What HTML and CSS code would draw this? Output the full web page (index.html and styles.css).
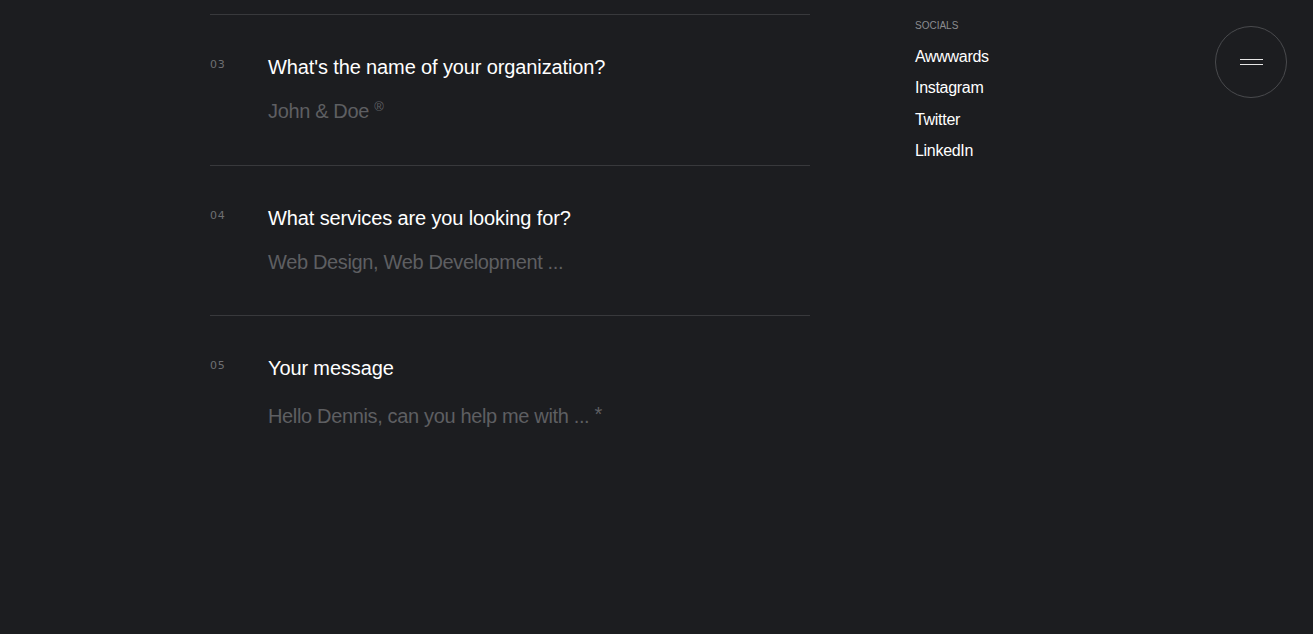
FILE: index.html
```
<!DOCTYPE html>
<html lang="en">
<head>
<meta charset="utf-8">
<title>Contact</title>
<link rel="stylesheet" href="styles.css">
</head>
<body>
<div class="page">
  <form class="form">
    <div class="field">
      <span class="num">03</span>
      <div class="body">
        <label class="question">What's the name of your organization?</label>
        <div class="answer">John &amp; Doe <sup class="mark">®</sup></div>
      </div>
    </div>
    <div class="field">
      <span class="num">04</span>
      <div class="body">
        <label class="question">What services are you looking for?</label>
        <div class="answer">Web Design, Web Development ...</div>
      </div>
    </div>
    <div class="field field-message">
      <span class="num">05</span>
      <div class="body">
        <label class="question">Your message</label>
        <div class="answer answer-message">Hello Dennis, can you help me with ... <span class="star">*</span></div>
      </div>
    </div>
  </form>
  <aside class="socials">
    <h5 class="socials-title">SOCIALS</h5>
    <ul class="socials-list">
      <li>Awwwards</li>
      <li>Instagram</li>
      <li>Twitter</li>
      <li>LinkedIn</li>
    </ul>
  </aside>
</div>
<button class="menu-btn" aria-label="Menu">
  <span class="bar"></span>
  <span class="bar"></span>
</button>
</body>
</html>
```
FILE: styles.css
```
* { box-sizing: border-box; }
html, body {
  margin: 0;
  padding: 0;
  background: #1c1d20;
  height: 100%;
}
body {
  font-family: "Liberation Sans", Arial, sans-serif;
  color: #ffffff;
  overflow: hidden;
}
.page {
  display: flex;
  padding-top: 14px;
  padding-left: 210px;
}
.form {
  width: 600px;
  display: flex;
  flex-direction: column;
}
.field {
  display: flex;
  border-top: 1px solid #38393c;
  height: 151px;
  padding-top: 40px;
}
.field + .field { height: 150px; }
.num {
  width: 58px;
  flex: none;
  font-family: "DejaVu Sans", "Liberation Sans", sans-serif;
  font-size: 11px;
  line-height: 20px;
  letter-spacing: 0.8px;
  color: #6e6f72;
}
.body {
  display: flex;
  flex-direction: column;
}
.question {
  font-size: 20px;
  line-height: 24px;
  letter-spacing: -0.12px;
  color: #ffffff;
}
.answer {
  margin-top: 20px;
  font-size: 20px;
  line-height: 24px;
  letter-spacing: -0.35px;
  color: #5e5f62;
}
.mark {
  font-size: 13px;
  line-height: 0;
  vertical-align: 0;
  position: relative;
  top: -7px;
  letter-spacing: 0;
}
.star {
  position: relative;
  top: -2px;
}
.answer-message { margin-top: 24px; }
.socials {
  margin-left: 105px;
  margin-top: -14px;
  padding-top: 20px;
}
.socials-title {
  margin: 0;
  font-size: 10px;
  line-height: 12px;
  font-weight: normal;
  color: #8b8c8f;
}
.socials-list {
  list-style: none;
  margin: 9px 0 0;
  padding: 0;
}
.socials-list li {
  font-size: 16px;
  line-height: 31.3px;
  letter-spacing: -0.3px;
  color: #ffffff;
}
.menu-btn {
  position: fixed;
  top: 26px;
  left: 1215px;
  width: 72px;
  height: 72px;
  border-radius: 50%;
  border: 1px solid #4a4b4e;
  background: transparent;
  padding: 0;
  display: flex;
  flex-direction: column;
  align-items: center;
  justify-content: center;
  gap: 4px;
}
.bar {
  display: block;
  width: 23px;
  height: 1px;
  background: #e6e6e6;
}
```
